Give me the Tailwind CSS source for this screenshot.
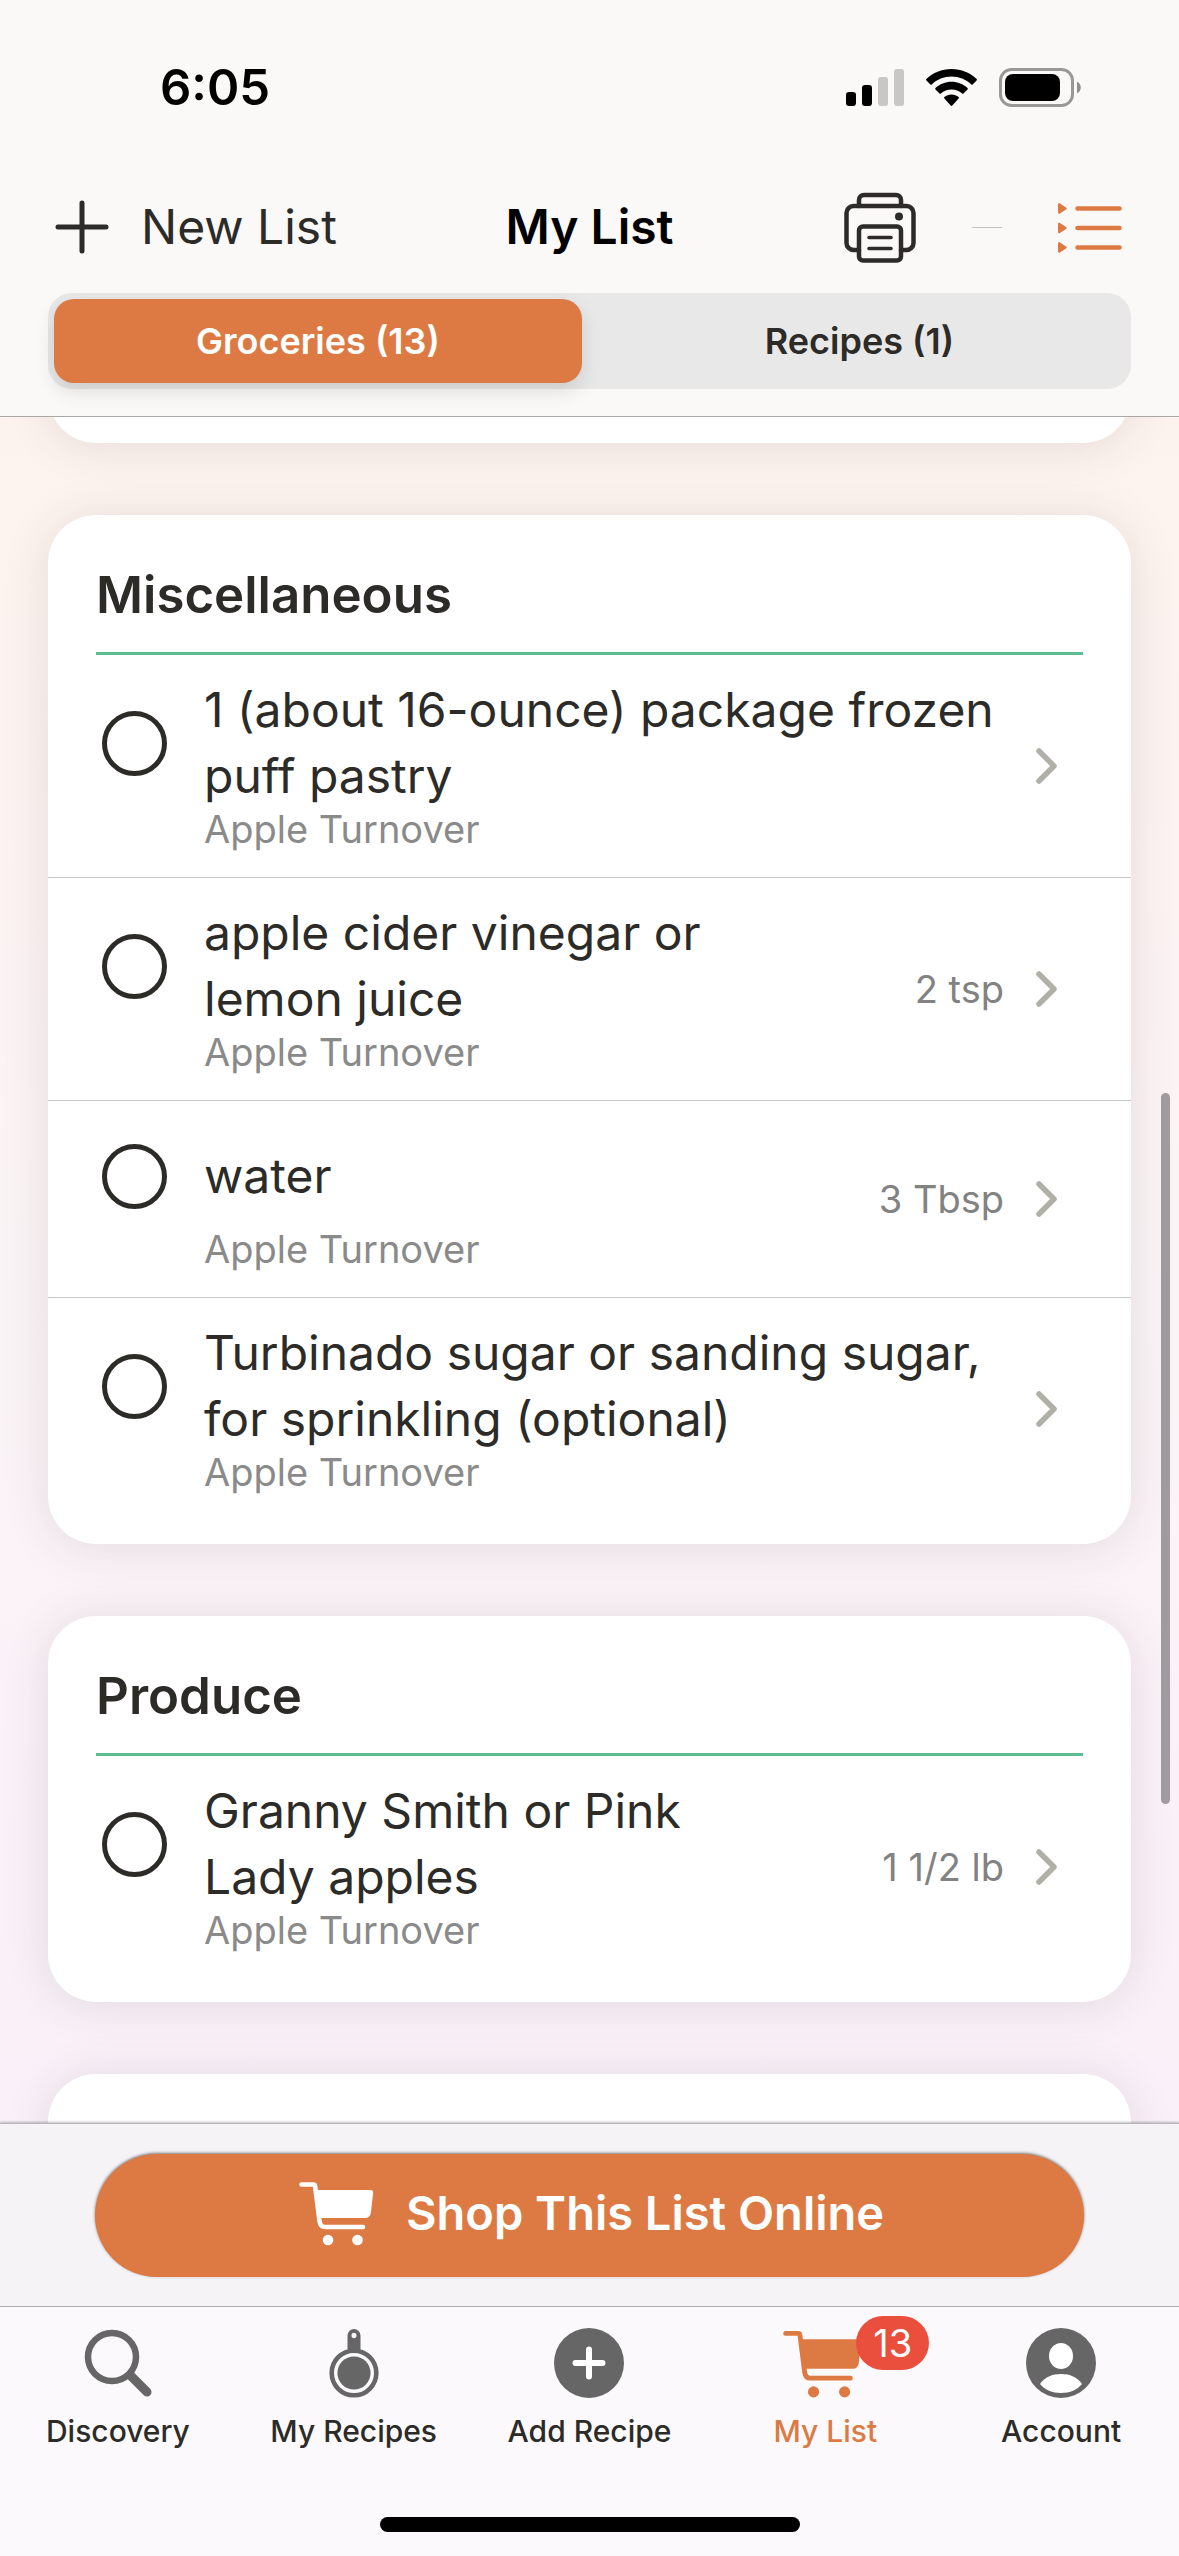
<!DOCTYPE html>
<html lang="en">
<head>
  <meta charset="UTF-8">
  <meta name="viewport" content="width=device-width, initial-scale=1.0">
  <title>My List</title>
  <script src="https://cdn.jsdelivr.net/npm/@tailwindcss/browser@4"></script>
</head>
<body class="font-['Inter',sans-serif] text-[#2c2b27] flex flex-col h-screen overflow-hidden bg-[#fbf9fb]">

  <!-- shared icons -->
  <svg class="hidden">
    <symbol id="cart" viewBox="0 0 75 64">
      <path d="M2.5 2.5h12c1 0 1.5.5 1.6 1.5L20.500 39c.5 4 2 6 5.500 6H64" fill="none" stroke="currentColor" stroke-width="4.600" stroke-linecap="round" stroke-linejoin="round"/>
      <path d="M18 8h53.500c2 0 2.800 1.200 2.600 3L72 30c-.5 4-2.500 6-6 6H21z" fill="currentColor"/>
      <circle cx="29" cy="58" r="5.300" fill="currentColor"/>
      <circle cx="58.500" cy="58" r="5.300" fill="currentColor"/>
    </symbol>
    <symbol id="chevron" viewBox="0 0 22 36">
      <path d="M3 3l15 15L3 33" fill="none" stroke="currentColor" stroke-width="5.500" stroke-linecap="round" stroke-linejoin="round"/>
    </symbol>
  </svg>

  <header class="bg-[#fbf9f7] border-b border-[#aaa8a6] px-12 pb-[27px]">
    <!-- status bar -->
    <div class="h-[176px] flex items-center justify-between pl-28 pr-[50px]">
      <span class="text-[49px] font-semibold text-black">6:05</span>
      <div class="flex items-center gap-[22px]">
        <svg class="w-[58px] h-[38px]" viewBox="0 0 58 38">
          <rect x="0" y="23" width="10" height="14" rx="3"/>
          <rect x="16" y="16" width="10" height="21" rx="3"/>
          <rect x="32" y="8" width="10" height="29" rx="3" fill="#c8c7c5"/>
          <rect x="48" y="0" width="10" height="37" rx="3" fill="#c8c7c5"/>
        </svg>
        <svg class="w-[51px] h-[38px]" viewBox="0 0 51 38">
          <path d="M25.500 0C15.700 0 6.800 3.800.4 10a1 1 0 0 0 0 1.400l4 4a1 1 0 0 0 1.400 0C11 10.500 18 7.600 25.500 7.600s14.500 2.900 19.700 7.800a1 1 0 0 0 1.400 0l4-4a1 1 0 0 0 0-1.400C44.200 3.800 35.300 0 25.500 0z"/>
          <path d="M25.500 12.800c-6.200 0-11.800 2.400-16 6.200a1 1 0 0 0 0 1.400l4 4a1 1 0 0 0 1.400 0c2.800-2.500 6.500-4 10.600-4s7.800 1.500 10.600 4a1 1 0 0 0 1.400 0l4-4a1 1 0 0 0 0-1.400c-4.200-3.800-9.800-6.200-16-6.200z"/>
          <path d="M25.500 25.500c-2.700 0-5.200 1-7.100 2.600a1 1 0 0 0 0 1.500l6.300 6.900c.5.500 1.100.5 1.600 0l6.300-6.900a1 1 0 0 0 0-1.500c-1.900-1.600-4.400-2.600-7.100-2.600z"/>
        </svg>
        <svg class="w-[82px] h-[40px]" viewBox="0 0 82 40">
          <rect x="1.500" y="1.500" width="72" height="36" rx="11" fill="none" stroke="#999896" stroke-width="3"/>
          <rect x="6" y="6" width="55" height="27" rx="8"/>
          <path d="M78 13.500c5 2.500 5 9.500 0 12z" fill="#8f8e8c"/>
        </svg>
      </div>
    </div>

    <!-- title bar -->
    <div class="h-[102px] grid grid-cols-[1fr_auto_1fr] items-center">
      <button class="flex items-center gap-8 pl-[7px] text-[48px]">
        <svg class="w-[54px] h-[54px]" viewBox="0 0 54 54" fill="none" stroke="currentColor" stroke-width="5" stroke-linecap="round"><path d="M27 3v48M3 27h48"/></svg>
        New List
      </button>
      <h1 class="text-[48px] font-semibold text-black">My List</h1>
      <div class="flex items-center justify-end gap-14 pr-[9px]">
        <button aria-label="Print">
          <svg class="w-[72px] h-[71px]" viewBox="0 0 72 71" fill="none" stroke="currentColor" stroke-width="4.500" stroke-linecap="round" stroke-linejoin="round">
            <path d="M15 14V8a5 5 0 0 1 5-5h32a5 5 0 0 1 5 5v6"/>
            <path d="M15 58H9.500a7 7 0 0 1-7-7V21a7 7 0 0 1 7-7h53a7 7 0 0 1 7 7v30a7 7 0 0 1-7 7H57"/>
            <rect x="15" y="34.500" width="42" height="34" rx="4"/>
            <path d="M25 45.500h22M25 56.500h22" stroke-width="3.600"/>
            <circle cx="55" cy="24.500" r="4" fill="currentColor" stroke="none"/>
          </svg>
        </button>
        <span class="w-[30px] h-px bg-[#c4c3c1]"></span>
        <button aria-label="List view" class="text-[#dd7a43]">
          <svg class="w-[64px] h-[52px]" viewBox="0 0 64 52">
            <g transform="translate(0 1.500)">
              <path d="M0 2c0-1 1-1.500 2-1l6 4c1 .6 1 1.400 0 2l-6 4c-1 .5-2 0-2-1zM0 21.500c0-1 1-1.500 2-1l6 4c1 .6 1 1.400 0 2l-6 4c-1 .5-2 0-2-1zM0 41c0-1 1-1.500 2-1l6 4c1 .6 1 1.400 0 2l-6 4c-1 .5-2 0-2-1z" fill="currentColor"/>
              <path d="M19.500 6h42M19.500 25.500h42M19.500 45h42" stroke="currentColor" stroke-width="4.600" stroke-linecap="round"/>
            </g>
          </svg>
        </button>
      </div>
    </div>

    <div class="mt-[15px] h-24 p-1.5 grid grid-cols-[528fr_531fr] gap-3 rounded-3xl bg-[#e9e8e8] text-[36px] font-semibold">
      <button class="rounded-[20px] bg-[#dd7a43] text-white shadow-[0_8px_20px_rgba(0,0,0,0.12)]">Groceries (13)</button>
      <button>Recipes (1)</button>
    </div>
  </header>

  <main class="relative flex-1 min-h-0 overflow-hidden px-12 bg-linear-to-b from-[#fdf3ee] via-[#fbf4f6] to-[#f9f0f9]">
    <div class="-mt-[70px] flex flex-col gap-[72px]">
      <section class="h-24 shrink-0 rounded-[48px] bg-white shadow-[0_3px_48px_rgba(60,50,50,0.12)]"></section>

      <section class="pb-6 rounded-[48px] bg-white shadow-[0_3px_48px_rgba(60,50,50,0.12)]">
        <h2 class="mx-12 pt-12 pb-[25px] border-b-3 border-[#5cbc92] text-[51px] leading-[64px] font-semibold">Miscellaneous</h2>
        <ul class="divide-y divide-[#c6c6c6]">
          <li class="flex items-center gap-4 pl-[54px] pr-[73px]">
            <label class="flex-1 grid grid-cols-[65px_1fr] gap-x-[37px] pt-[22px] pb-7">
              <input type="checkbox" class="appearance-none self-center size-[65px] rounded-full border-5 border-[#2c2b27]">
              <span class="min-h-[106px] flex items-center text-[48px] leading-[66px]">1 (about 16-ounce) package frozen puff pastry</span>
              <span class="col-start-2 text-[38px] leading-[40px] text-[#8a8a8a]">Apple Turnover</span>
            </label>
            <button aria-label="Details" class="text-[#b0b0a9]"><svg class="w-[22px] h-9"><use href="#chevron"/></svg></button>
          </li>
          <li class="flex items-center gap-8 pl-[54px] pr-[73px]">
            <label class="flex-1 grid grid-cols-[65px_1fr] gap-x-[37px] pt-[22px] pb-7">
              <input type="checkbox" class="appearance-none self-center size-[65px] rounded-full border-5 border-[#2c2b27]">
              <span class="min-h-[106px] flex items-center text-[48px] leading-[66px]">apple cider vinegar or lemon juice</span>
              <span class="col-start-2 text-[38px] leading-[40px] text-[#8a8a8a]">Apple Turnover</span>
            </label>
            <span class="w-60 text-right text-[38px] text-[#828282]">2 tsp</span>
            <button aria-label="Details" class="text-[#b0b0a9]"><svg class="w-[22px] h-9"><use href="#chevron"/></svg></button>
          </li>
          <li class="flex items-center gap-8 pl-[54px] pr-[73px]">
            <label class="flex-1 grid grid-cols-[65px_1fr] gap-x-[37px] pt-[22px] pb-7">
              <input type="checkbox" class="appearance-none self-center size-[65px] rounded-full border-5 border-[#2c2b27]">
              <span class="min-h-[106px] flex items-center text-[48px] leading-[66px]">water</span>
              <span class="col-start-2 text-[38px] leading-[40px] text-[#8a8a8a]">Apple Turnover</span>
            </label>
            <span class="w-60 text-right text-[38px] text-[#828282]">3 Tbsp</span>
            <button aria-label="Details" class="text-[#b0b0a9]"><svg class="w-[22px] h-9"><use href="#chevron"/></svg></button>
          </li>
          <li class="flex items-center gap-4 pl-[54px] pr-[73px]">
            <label class="flex-1 grid grid-cols-[65px_1fr] gap-x-[37px] pt-[22px] pb-7">
              <input type="checkbox" class="appearance-none self-center size-[65px] rounded-full border-5 border-[#2c2b27]">
              <span class="min-h-[106px] flex items-center text-[48px] leading-[66px]">Turbinado sugar or sanding sugar, for sprinkling (optional)</span>
              <span class="col-start-2 text-[38px] leading-[40px] text-[#8a8a8a]">Apple Turnover</span>
            </label>
            <button aria-label="Details" class="text-[#b0b0a9]"><svg class="w-[22px] h-9"><use href="#chevron"/></svg></button>
          </li>
        </ul>
      </section>

      <section class="pb-6 rounded-[48px] bg-white shadow-[0_3px_48px_rgba(60,50,50,0.12)]">
        <h2 class="mx-12 pt-12 pb-[25px] border-b-3 border-[#5cbc92] text-[51px] leading-[64px] font-semibold">Produce</h2>
        <ul>
          <li class="flex items-center gap-8 pl-[54px] pr-[73px]">
            <label class="flex-1 grid grid-cols-[65px_1fr] gap-x-[37px] pt-[22px] pb-7">
              <input type="checkbox" class="appearance-none self-center size-[65px] rounded-full border-5 border-[#2c2b27]">
              <span class="min-h-[106px] flex items-center text-[48px] leading-[66px]">Granny Smith or Pink Lady apples</span>
              <span class="col-start-2 text-[38px] leading-[40px] text-[#8a8a8a]">Apple Turnover</span>
            </label>
            <span class="w-60 text-right text-[38px] text-[#828282]">1 1/2 lb</span>
            <button aria-label="Details" class="text-[#b0b0a9]"><svg class="w-[22px] h-9"><use href="#chevron"/></svg></button>
          </li>
        </ul>
      </section>

      <section class="h-60 shrink-0 rounded-[48px] bg-white shadow-[0_3px_48px_rgba(60,50,50,0.12)]"></section>
    </div>

    <!-- scroll thumb -->
    <div class="absolute right-[9px] top-[676px] w-[9px] h-[711px] rounded-full bg-[#a09b9e]"></div>
  </main>

  <div class="relative px-[95px] pt-[30px] pb-[29px] bg-[#f5f3f6] border-t border-[#b8b6b9] shadow-[0_-1px_2px_rgba(0,0,0,0.25)]">
    <button class="w-full h-[123px] pl-1 pb-1 flex items-center justify-center gap-8 rounded-full bg-[#dd7a43] text-white text-[47px] font-semibold shadow-[0_-1px_3px_rgba(0,0,0,0.5)]">
      <svg class="w-[75px] h-16"><use href="#cart"/></svg>
      Shop This List Online
    </button>
  </div>

  <nav class="relative h-[250px] border-t border-[#acabad] bg-[#fbf9fc]">
    <div class="grid grid-cols-5 pt-5 text-[30px] font-medium">
      <a href="#" class="flex flex-col items-center gap-2.5">
        <svg class="w-[70px] h-[72px]" viewBox="0 0 70 72" fill="none" stroke="#666">
          <circle cx="29" cy="30" r="24" stroke-width="6.500"/>
          <path d="M47.500 48.500L64 65" stroke-width="9" stroke-linecap="round"/>
        </svg>
        Discovery
      </a>
      <a href="#" class="flex flex-col items-center gap-2.5">
        <svg class="w-[50px] h-[72px]" viewBox="0 0 50 72">
          <path d="M18.500 26V8.500a6.500 6.500 0 0 1 13 0V26z" fill="#666"/>
          <circle cx="25" cy="46" r="22.300" fill="#fbf9fc" stroke="#666" stroke-width="4.600"/>
          <circle cx="25" cy="46" r="16.600" fill="#666"/>
          <ellipse cx="25" cy="8.500" rx="2.500" ry="2.800" fill="#fbf9fc"/>
        </svg>
        My Recipes
      </a>
      <a href="#" class="flex flex-col items-center gap-2.5">
        <svg class="w-[70px] h-[72px]" viewBox="0 0 70 72">
          <circle cx="35" cy="36" r="35" fill="#666"/>
          <path d="M35 22.500v27M21.500 36h27" stroke="#fff" stroke-width="6" stroke-linecap="round"/>
        </svg>
        Add Recipe
      </a>
      <a href="#" class="relative flex flex-col items-center gap-2.5 text-[#dd7a43]">
        <svg class="w-[84px] h-[72px]" viewBox="0 0 84 72"><use href="#cart" x="0" y="3" width="79" height="69"/></svg>
        My List
        <span class="absolute -top-[11px] left-1/2 ml-[31px] w-[73px] h-[54px] flex items-center justify-center rounded-full bg-[#ea4f3e] text-white text-[38px] font-normal">13</span>
      </a>
      <a href="#" class="flex flex-col items-center gap-2.5">
        <svg class="w-[70px] h-[72px]" viewBox="0 0 70 72">
          <circle cx="35" cy="36" r="35" fill="#666"/>
          <ellipse cx="35" cy="29" rx="12" ry="13" fill="#fff"/>
          <path d="M14 57c5-7 12-10 21-10s16 3 21 10c-5 6-12 9-21 9s-16-3-21-9z" fill="#fff"/>
        </svg>
        Account
      </a>
    </div>
    <div class="absolute inset-x-0 bottom-6 mx-auto w-[420px] h-[15px] rounded-full bg-black"></div>
  </nav>

</body>
</html>
